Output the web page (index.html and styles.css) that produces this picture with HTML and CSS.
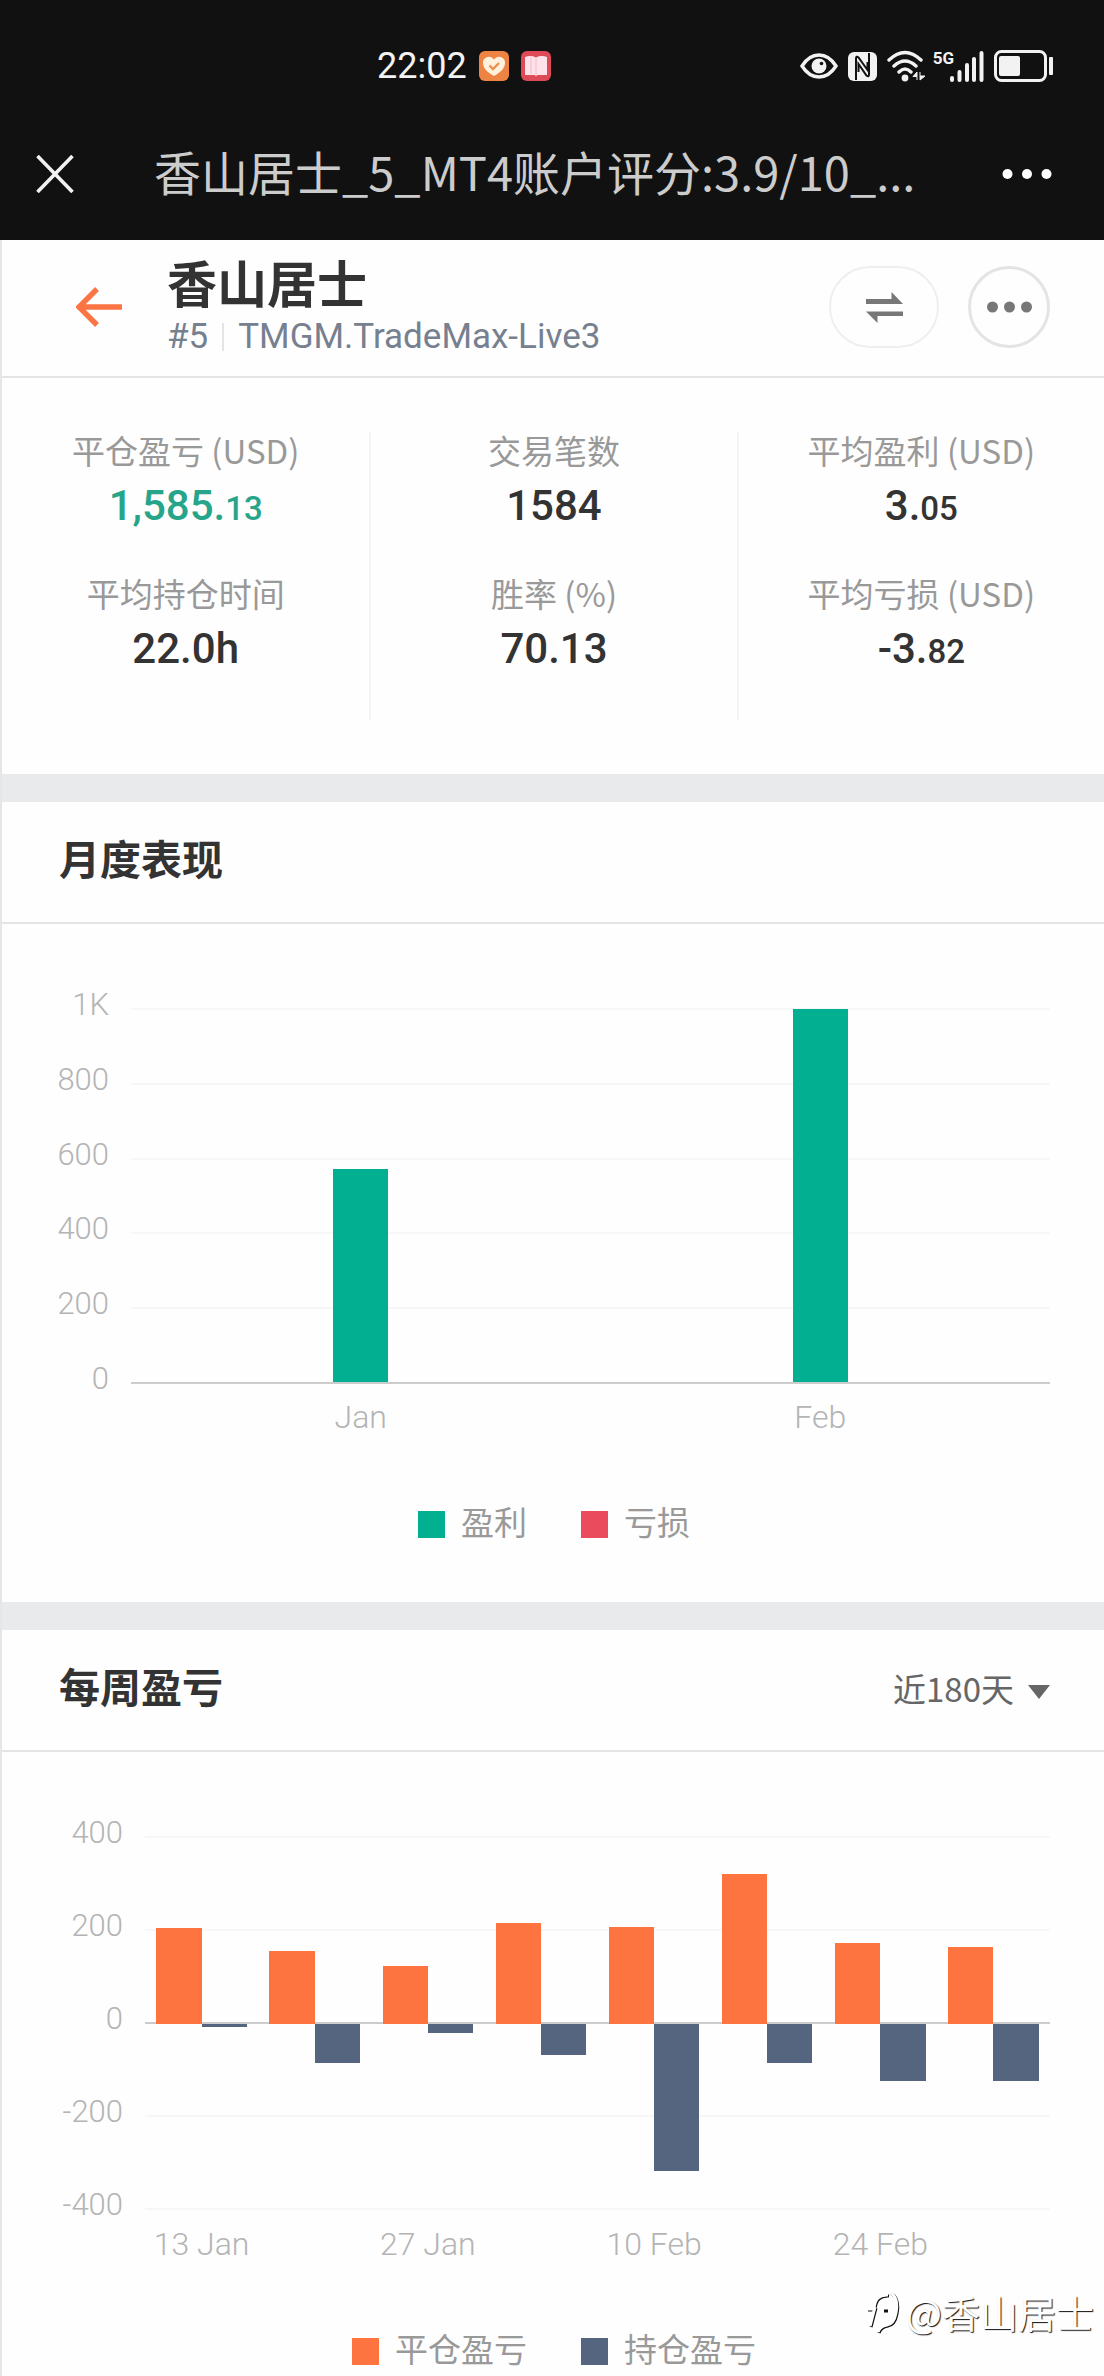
FILE: index.html
```html
<!DOCTYPE html>
<html lang="zh-CN">
<head>
<meta charset="utf-8">
<meta name="viewport" content="width=device-width, initial-scale=1">
<title>香山居士_5_MT4账户评分:3.9/10</title>
<link rel="stylesheet" href="styles.css">
</head>
<body>
<div class="top">
  <div class="status">
    <div class="status-left">
      <span class="clock">22:02</span>
      <svg class="app-icon" viewBox="0 0 30 30" aria-hidden="true">
        <rect width="30" height="30" rx="6" fill="#ee8443"/>
        <path d="M15 25C8 21 4 17 4 12a6 6 0 0 1 11-3.500a6 6 0 0 1 11 3.500c0 5-4 9-11 13z" fill="#fff1dc"/>
        <path d="M10.500 14.500l3.500 3.500 6-6" fill="none" stroke="#e8904f" stroke-width="2.400"/>
      </svg>
      <svg class="app-icon" viewBox="0 0 30 30" aria-hidden="true">
        <rect width="30" height="30" rx="6" fill="#df4a58"/>
        <path d="M4 6q6-2 11 0.500q5-2.500 11-0.500v18H16l-1 1.500-1-1.500H4z" fill="#ffe3ea"/>
        <path d="M15 6.500V24M10 6v17" stroke="#f3b9c6" stroke-width="1"/>
      </svg>
    </div>
    <div class="status-right">
      <svg width="38" height="26" viewBox="0 0 38 26" aria-hidden="true">
        <path d="M2 13Q9 2 19 2T36 13Q29 24 19 24T2 13z" fill="none" stroke="#f2f2f2" stroke-width="3.400"/>
        <circle cx="19" cy="13" r="7.500" fill="#f2f2f2"/><circle cx="21.500" cy="10.500" r="1.800" fill="#111"/>
      </svg>
      <svg width="29" height="29" viewBox="0 0 29 29" aria-hidden="true">
        <rect width="29" height="29" rx="6" fill="#f2f2f2"/>
        <path d="M8 28V6.500q0-3 2.500-1L19.500 18v-8" fill="none" stroke="#111" stroke-width="2"/>
        <path d="M21 1v21.500q0 3-2.500 1L10.500 12v8" fill="none" stroke="#111" stroke-width="2"/>
      </svg>
      <svg width="38" height="32" viewBox="0 0 38 32" aria-hidden="true">
        <g fill="none" stroke="#f2f2f2" stroke-width="3.400" stroke-linecap="round">
          <path d="M2 10Q18-5 34 10M7 16Q18 6 29 16M12 22Q18 16 24 22"/>
        </g>
        <circle cx="18" cy="28" r="3.400" fill="#f2f2f2"/>
        <path d="M30 30v-8l-4 4.500h4M33 22v8l5-4h-5" fill="#f2f2f2" stroke="#f2f2f2"/>
      </svg>
      <span class="network">5G</span>
      <svg width="34" height="31" viewBox="0 0 34 31" aria-hidden="true">
        <g stroke="#f2f2f2" stroke-width="4" stroke-linecap="round">
          <path d="M2 27v2M9.500 21v8M17 14v15M24 8v21M31.500 2v27"/>
        </g>
      </svg>
      <svg width="60" height="32" viewBox="0 0 60 32" aria-hidden="true">
        <rect x="1.500" y="1.500" width="50" height="29" rx="6" fill="none" stroke="#f2f2f2" stroke-width="3"/>
        <rect x="5" y="6" width="21" height="20" rx="2" fill="#f2f2f2"/>
        <rect x="55" y="7" width="4" height="18" rx="1" fill="#f2f2f2"/>
      </svg>
    </div>
  </div>
  <nav class="nav">
    <button class="icon-button" aria-label="关闭">
      <svg width="38" height="38" viewBox="0 0 38 38"><path d="M1.500 1l35 36M36.500 1l-35 36" stroke="#f2f2f2" stroke-width="3.600"/></svg>
    </button>
    <div class="nav-title">香山居士_5_MT4账户评分:3.9/10_...</div>
    <button class="icon-button" aria-label="菜单">
      <svg width="50" height="12" viewBox="0 0 50 12" fill="#fff"><circle cx="5.500" cy="6" r="5"/><circle cx="25" cy="6" r="5"/><circle cx="44.500" cy="6" r="5"/></svg>
    </button>
  </nav>
</div>
<main class="app">
  <header class="account">
    <a class="back" href="#" aria-label="返回">
      <svg width="46" height="40" viewBox="0 0 46 40"><path d="M46 20H3M21 2L3 20l18 18" fill="none" stroke="#fb7444" stroke-width="5.400"/></svg>
    </a>
    <div class="account-text">
      <h1>香山居士</h1>
      <p><span>#5</span><span class="rule"></span><span>TMGM.TradeMax-Live3</span></p>
    </div>
    <button class="swap" aria-label="切换">
      <svg width="37" height="33" viewBox="0 0 37 33" fill="#777"><path d="M0 8h25.500V1L37 13H0zM37 25H11.500V32L0 20.500h37z"/></svg>
    </button>
    <button class="more" aria-label="更多">
      <svg width="45" height="12" viewBox="0 0 45 12" fill="#777"><circle cx="5.500" cy="6" r="5.500"/><circle cx="22.500" cy="6" r="5.500"/><circle cx="39.500" cy="6" r="5.500"/></svg>
    </button>
  </header>

  <section class="stats">
    <dl>
      <div><dt>平仓盈亏 (USD)</dt><dd class="gain">1,585.<small>13</small></dd></div>
      <div><dt>平均持仓时间</dt><dd>22.0h</dd></div>
    </dl>
    <dl>
      <div><dt>交易笔数</dt><dd>1584</dd></div>
      <div><dt>胜率 (%)</dt><dd>70.13</dd></div>
    </dl>
    <dl>
      <div><dt>平均盈利 (USD)</dt><dd>3.<small>05</small></dd></div>
      <div><dt>平均亏损 (USD)</dt><dd>-3.<small>82</small></dd></div>
    </dl>
  </section>

  <section class="panel">
    <header class="panel-head"><h2>月度表现</h2></header>
    <div class="chart monthly">
      <div class="plot">
        <div class="ticks">
          <div><span>1K</span><i></i></div>
          <div><span>800</span><i></i></div>
          <div><span>600</span><i></i></div>
          <div><span>400</span><i></i></div>
          <div><span>200</span><i></i></div>
          <div class="zero"><span>0</span><i></i></div>
        </div>
        <div class="bars">
          <div><b class="profit" style="height:57%"></b></div>
          <div><b class="profit" style="height:100%"></b></div>
        </div>
      </div>
      <div class="dates"><span>Jan</span><span>Feb</span></div>
      <ul class="legend">
        <li><i class="profit"></i>盈利</li>
        <li><i class="loss"></i>亏损</li>
      </ul>
    </div>
  </section>

  <section class="panel">
    <header class="panel-head">
      <h2>每周盈亏</h2>
      <label class="range">
        <select aria-label="时间范围"><option>近180天</option></select>
        <svg width="22" height="14" viewBox="0 0 22 14" fill="#666"><path d="M0 0h22L11 14z"/></svg>
      </label>
    </header>
    <div class="chart weekly">
      <div class="plot">
        <div class="ticks">
          <div><span>400</span><i></i></div>
          <div><span>200</span><i></i></div>
          <div class="zero"><span>0</span><i></i></div>
          <div><span>-200</span><i></i></div>
          <div><span>-400</span><i></i></div>
        </div>
        <div class="bars">
          <div><b class="closed" style="height:51%"></b><b class="open" style="height:2%"></b></div>
          <div><b class="closed" style="height:39%"></b><b class="open" style="height:21%"></b></div>
          <div><b class="closed" style="height:31%"></b><b class="open" style="height:5%"></b></div>
          <div><b class="closed" style="height:54%"></b><b class="open" style="height:17%"></b></div>
          <div><b class="closed" style="height:52%"></b><b class="open" style="height:79%"></b></div>
          <div><b class="closed" style="height:80%"></b><b class="open" style="height:21%"></b></div>
          <div><b class="closed" style="height:43%"></b><b class="open" style="height:31%"></b></div>
          <div><b class="closed" style="height:41%"></b><b class="open" style="height:31%"></b></div>
        </div>
      </div>
      <div class="dates"><span>13 Jan</span><span></span><span>27 Jan</span><span></span><span>10 Feb</span><span></span><span>24 Feb</span><span></span></div>
      <ul class="legend">
        <li><i class="closed"></i>平仓盈亏</li>
        <li><i class="open"></i>持仓盈亏</li>
      </ul>
    </div>
    <div class="watermark">
      <svg width="34" height="44" viewBox="0 0 34 44" fill="none" stroke-width="3">
        <g stroke="#111"><path d="M4 37L9 18M1 20h7q1-15 14-14"/><path d="M24 3q9 6 6 21q-2 11-9 12q-7 1-9 7"/><path d="M17 21h4"/></g>
        <g stroke="#fff"><path d="M3 36L8 17M0 19h7q1-15 14-14"/><path d="M23 2q9 6 6 21q-2 11-9 12q-7 1-9 7"/></g>
      </svg>
      <span>@香山居士</span>
    </div>
  </section>
</main>
</body>
</html>
```
FILE: styles.css
```css
* { box-sizing: border-box; margin: 0; padding: 0; }

body {
  background: #fefefe;
  color: #333;
  font-family: "Noto Sans CJK SC", sans-serif;
}

svg { display: block; flex: none; }
button { background: none; border: 0; }
ul { list-style: none; }

/* phone status bar and browser title bar */
.top { background: #111; }

.status {
  display: flex;
  justify-content: space-between;
  align-items: center;
  height: 132px;
  padding: 0 50px 0 377px;
  color: #f2f2f2;
}

.status-left, .status-right { display: flex; align-items: center; }
.status-left { gap: 12px; }
.status-right { gap: 10px; }
.clock { font: 36px/40px Roboto, sans-serif; }
.app-icon { width: 30px; height: 30px; }
.network { align-self: flex-start; font: bold 17px/16px Roboto, sans-serif; margin: 0 -14px 0 -2px; }

.nav {
  display: flex;
  align-items: center;
  height: 108px;
  padding: 0 52px 24px 36px;
}

.nav-title {
  flex: 1;
  padding: 0 0 6px 80px;
  white-space: nowrap;
  color: #ccc;
  font-size: 47px;
  line-height: 60px;
}

/* account header */
.app { position: relative; border-left: 2px solid #e6e6e6; }

.account {
  display: flex;
  align-items: center;
  height: 138px;
  padding: 0 54px 2px 74px;
  border-bottom: 2px solid #e4e4e4;
}

.account-text { flex: 1; padding-left: 45px; }
.account h1 { font-size: 50px; font-weight: 700; line-height: 60px; }

.account p {
  display: flex;
  align-items: center;
  gap: 14px;
  color: #76808f;
  font: 35px/52px Roboto, sans-serif;
}

.rule { width: 2px; height: 28px; background: #e2e4e8; }

.swap, .more {
  display: flex;
  align-items: center;
  justify-content: center;
  height: 82px;
  border-radius: 41px;
}

.swap { width: 110px; border: 2px solid #efefef; margin-right: 29px; }
.more { width: 82px; border: 3px solid #e4e4e4; }

/* key figures */
.stats {
  display: grid;
  grid-template-columns: repeat(3, 1fr);
  padding: 54px 0;
}

.stats dl { height: 288px; text-align: center; }
.stats dl + dl { border-left: 2px solid #f5f5f5; }
.stats dl > div { height: 143px; }
.stats dt { color: #999; font-size: 33px; line-height: 36px; }
.stats dd { font: 500 42px/76px Roboto, sans-serif; }
.stats small { font-size: 33px; }
.gain { color: #26a58a; }

/* chart panels */
.panel { border-top: 28px solid #e9eaec; }

.panel-head {
  display: flex;
  align-items: center;
  justify-content: space-between;
  height: 122px;
  padding: 0 54px 10px 57px;
  border-bottom: 2px solid #e4e4e4;
}

.panel-head h2 { font-size: 41px; line-height: 60px; }
.range { display: flex; align-items: center; gap: 14px; padding-top: 6px; }
.range svg { margin-top: 8px; }

.range select {
  appearance: none;
  border: 0;
  background: none;
  color: #666;
  font: 33px/48px "Noto Sans CJK SC", sans-serif;
}

.chart { padding: 48px 54px 61px 50px; }
.plot { display: grid; height: 448px; }
.ticks, .bars { grid-area: 1 / 1; }
.ticks { display: grid; grid-auto-rows: 1fr; }
.ticks div { display: flex; align-items: center; }

.ticks span {
  flex: none;
  width: 57px;
  margin-right: 22px;
  padding-bottom: 8px;
  text-align: right;
  color: #b4b4b4;
  font: 300 31px/40px Roboto, sans-serif;
}

.ticks i { flex: 1; height: 2px; background: #f7f7f7; }
.ticks .zero i { background: #ccc; }

.bars {
  display: grid;
  grid-auto-flow: column;
  grid-auto-columns: 1fr;
  margin: 37px 0 38px 79px;
}

.monthly .bars div { display: flex; align-items: flex-end; justify-content: center; }
.monthly .bars b { width: 12%; }

.dates {
  display: grid;
  grid-auto-flow: column;
  grid-auto-columns: 1fr;
  height: 40px;
  margin: -23px 0 64px 79px;
  color: #b4b4b4;
  font: 300 32px/40px Roboto, sans-serif;
  text-align: center;
}

.legend {
  display: flex;
  justify-content: center;
  gap: 54px;
  padding-left: 6px;
  color: #999;
  font-size: 33px;
  line-height: 40px;
}

.legend li { display: flex; align-items: center; gap: 16px; }
.legend i { width: 27px; height: 27px; margin-top: 6px; }

.profit { background: #02af91; }
.loss { background: #ea4b5d; }
.closed { background: #fe7441; }
.open { background: #56657f; }

.weekly { padding: 38px 54px 8px 50px; }
.weekly .plot { height: 466px; }
.weekly .ticks span { width: 71px; }
.weekly .bars { margin: 47px 0 46px 93px; }

.weekly .bars div {
  display: grid;
  grid-template: 1fr 1fr / 1fr 1fr;
  padding: 0 10%;
}

.weekly .bars .closed { align-self: end; }
.weekly .bars .open { grid-area: 2 / 2; }
.weekly .dates { margin: -32px 0 64px 93px; }

.watermark {
  position: absolute;
  right: 10px;
  bottom: 40px;
  display: flex;
  align-items: center;
  gap: 5px;
  color: #fff;
  font-size: 38px;
  line-height: 48px;
  text-shadow: 1px 1px 1px #111;
}
```
